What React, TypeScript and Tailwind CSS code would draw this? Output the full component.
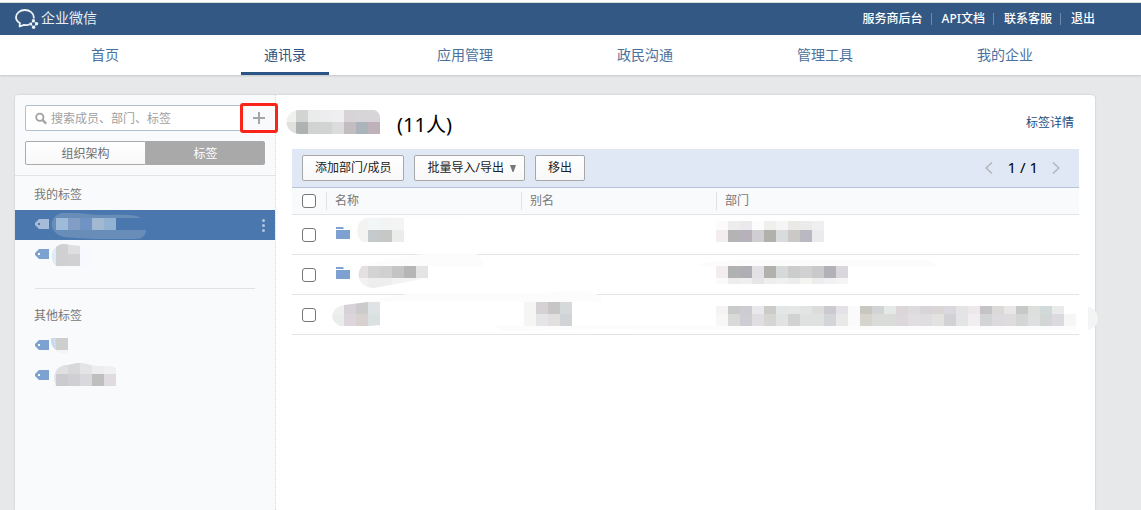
import { ReactNode } from 'react';

const NAV_ITEMS = ['首页', '通讯录', '应用管理', '政民沟通', '管理工具', '我的企业'];
const ACCOUNT_LINKS = ['服务商后台', 'API文档', '联系客服', '退出'];

type Cell = [x: number, y: number, w: number, h: number, color: string];

// One strip of equal blocks, 12px wide each
function strip(x: number, y: number, h: number, colors: string): Cell[] {
  return colors.split(' ').map((c, i) => [x + i * 12, y, 12, h, `#${c}`]);
}

function Mosaic({ box, cells, smear, smearColor = '#fcfcfc', clip, id }: {
  box: [number, number, number, number];
  cells: Cell[];
  smear?: string;
  smearColor?: string;
  clip?: string;
  id: string;
}) {
  return (
    <svg
      width={box[2]}
      height={box[3]}
      viewBox={box.join(' ')}
      className="block shrink-0 overflow-visible"
      aria-hidden="true"
    >
      {smear && <path d={smear} fill={smearColor} />}
      {clip && (
        <clipPath id={id}>
          <path d={clip} />
        </clipPath>
      )}
      <g clipPath={clip ? `url(#${id})` : undefined} shapeRendering="crispEdges">
        {cells.map(([x, y, w, h, color], i) => (
          <rect key={i} x={x} y={y} width={w} height={h} fill={color} />
        ))}
      </g>
    </svg>
  );
}

function Logo() {
  return (
    <svg width="24" height="20" viewBox="0 0 24 20" fill="none" aria-hidden="true">
      <path
        d="M14 15.700c-1.600.5-3.400.5-5 .1L4.600 17.500l.3-3.400C2.300 12.600 1 10.500 1 8.300 1 4.200 5 1 9.900 1s8.900 3.200 8.900 7.300v1.200"
        stroke="#eef2f6"
        strokeWidth="1.800"
        strokeLinejoin="round"
      />
      <g fill="#eef2f6">
        <circle cx="18.400" cy="11.800" r="1.700" />
        <circle cx="21.600" cy="14.800" r="1.700" />
        <circle cx="18.600" cy="18.200" r="1.700" />
        <circle cx="15.600" cy="15" r="1.600" />
      </g>
      <path d="M18.400 11.800l3.200 3-3 3.400-3-3.200z" stroke="#eef2f6" strokeWidth=".8" />
    </svg>
  );
}

function TagIcon({ color, hole }: { color: string; hole: string }) {
  return (
    <svg width="14" height="10" viewBox="0 0 14 10" className="mt-[9px] shrink-0" aria-hidden="true">
      <path d="M4 0h10v10H4L0 6V4z" fill={color} />
      <rect x="3" y="4" width="2" height="2" fill={hole} />
    </svg>
  );
}

function FolderIcon() {
  return (
    <svg width="14" height="12" viewBox="0 0 14 12" className="mb-1 shrink-0" aria-hidden="true">
      <path d="M0 0h7l1 2H0zM0 3h14v9H0z" fill="#7da2d1" />
    </svg>
  );
}

function TagRow({ children, active, gap }: { children: ReactNode; active?: boolean; gap: string }) {
  return (
    <li>
      <a
        href="#tag"
        aria-label="标签"
        className={`flex h-[30px] items-start pl-5 pr-[10px] ${gap} ${active ? 'bg-[#4a77ad]' : ''}`}
      >
        <TagIcon color={active ? '#a5bbd8' : '#7da2d1'} hole={active ? '#4a77ad' : '#f9fafc'} />
        {children}
        {active && (
          <svg width="3" height="13" viewBox="0 0 3 13" fill="#b4c6dd" className="ml-auto mt-[9px]" aria-hidden="true">
            <circle cx="1.500" cy="1.500" r="1.500" />
            <circle cx="1.500" cy="6.500" r="1.500" />
            <circle cx="1.500" cy="11.500" r="1.500" />
          </svg>
        )}
      </a>
    </li>
  );
}

function Sidebar() {
  return (
    <aside className="w-[261px] shrink-0 rounded-tl border-r border-dotted border-[#d5dae0] bg-[#f9fafc]">
      <div className="border-b border-[#e2e4e7] p-[10px]">
        <div className="relative flex h-[26px] items-center rounded-xs border border-[#b2bfcc] bg-white pl-[9px]">
          <svg width="13" height="13" viewBox="0 0 13 13" fill="none" stroke="#a3a3a3" strokeWidth="2" aria-hidden="true">
            <circle cx="5.200" cy="5.200" r="3.900" />
            <path d="M8 8l4 4" strokeWidth="2.400" />
          </svg>
          <input
            type="text"
            aria-label="搜索"
            placeholder="搜索成员、部门、标签"
            className="ml-1 w-full min-w-0 bg-transparent pt-[2px] text-[12px] text-[#333] outline-none placeholder:text-[#a0a0a0]"
          />
          {/* highlighted add button, overlaps the right edge of the search box */}
          <button
            type="button"
            aria-label="添加"
            className="absolute -right-[14px] -top-[3px] flex h-[30px] w-[38px] items-center justify-center rounded-[3px] border-3 border-[#fb2418] bg-[#f9fafc]"
          >
            <svg width="12" height="12" viewBox="0 0 12 12" fill="#a6a6a6" aria-hidden="true">
              <path d="M5 0h2v5h5v2H7v5H5V7H0V5h5z" />
            </svg>
          </button>
        </div>
        <div className="mt-[10px] flex h-6 text-[12px]">
          <button type="button" className="flex-1 rounded-l-xs border border-[#ababab] bg-linear-to-b from-white to-[#f8f8f8] pt-[2px] text-[#6f6f6f]">
            组织架构
          </button>
          <button type="button" className="flex-1 rounded-r-xs bg-[#a9a9a9] pt-[2px] text-white">标签</button>
        </div>
      </div>

      <h2 className="mt-[9px] px-[19px] pb-[5px] text-[12px] leading-5 text-[#777]">我的标签</h2>
      <ul>
        <TagRow active gap="gap-[2px]">
          <Mosaic
            id="tag-a"
            box={[51, 210, 95, 30]}
            cells={strip(56, 218, 12, '9ebbd9 829dc6 6f93c3 a2b9d1 93b2d3')}
            smear="M56 230H146C146 236 142 239 135 239H95C85 238 70 238 64 237C48 233 48 216 62 213H76C88 214 95 215 108 215C125 214 138 215 141 218H56Z"
            smearColor="#698db9"
          />
        </TagRow>
        <TagRow gap="gap-[2px]">
          <Mosaic
            id="tag-b"
            box={[51, 240, 41, 30]}
            cells={[[51, 244, 5, 22, '#e1ebf6'], [56, 244, 12, 22, '#cfd0d1'], [68, 244, 12, 10, '#dedee0'], [68, 254, 12, 12, '#d1d1d3'], [80, 247, 12, 19, '#f8f9fe']]}
            clip="M56 266C49 260 50 247 62 244C68 244 74 246 92 247V266Z"
          />
        </TagRow>
      </ul>
      <hr className="mx-5 mt-[18px] border-[#e0e2e5]" />
      <h2 className="mt-[17px] px-[19px] pb-[5px] text-[12px] leading-5 text-[#777]">其他标签</h2>
      <ul>
        <TagRow gap="gap-[2px]">
          <Mosaic
            id="tag-c"
            box={[51, 331, 17, 24]}
            cells={[[51, 338, 5, 12, '#cbdaec'], [56, 338, 12, 12, '#cdcfce']]}
            smear="M56 350C58 353 63 355 68 353V350Z"
            smearColor="#f4f5f6"
            clip="M51 338H68V350H56C52 348 50 342 51 338Z"
          />
        </TagRow>
        <TagRow gap="gap-[5px]">
          <Mosaic
            id="tag-d"
            box={[54, 361, 62, 30]}
            cells={[
              [54, 362, 2, 24, '#dce5f2'],
              ...strip(56, 362, 12, 'e0e0e3 d8d8db e4e4e7 ededef f0eff2'),
              ...strip(56, 374, 12, 'ccccd0 d0cfd3 d9d8dd bec0bf dfdbe0'),
            ]}
            clip="M56 386C52 378 54 367 65 365C71 365 74 363 80 363C88 363 90 366 98 366C110 366 113 366 116 368V386Z"
          />
        </TagRow>
      </ul>
    </aside>
  );
}

const TOOL_BUTTON =
  'flex h-[26px] items-center rounded-xs border border-[#a8a8a8] bg-linear-to-b from-white to-[#f8f8f8] px-3 text-[12px] text-[#222]';

function Toolbar() {
  return (
    <div className="flex h-[38px] items-center gap-[10px] bg-[#dfe8f4] pl-[10px] pr-[19px]">
      <button type="button" className={TOOL_BUTTON}>添加部门/成员</button>
      <button type="button" className={`${TOOL_BUTTON} gap-[6px]`}>
        批量导入/导出
        <svg width="6" height="7" viewBox="0 0 6 7" fill="#777" className="-mr-1" aria-hidden="true">
          <path d="M0 0h6L3.500 7h-1z" />
        </svg>
      </button>
      <button type="button" className={TOOL_BUTTON}>移出</button>
      <div className="ml-auto flex items-center gap-[14px]">
        <button type="button" aria-label="上一页">
          <svg width="8" height="12" viewBox="0 0 8 12" fill="none" stroke="#b4b8bd" strokeWidth="1.600" aria-hidden="true">
            <path d="M7 .5L1.200 6 7 11.500" />
          </svg>
        </button>
        <span className="pb-[2px] text-[15px] leading-5 text-black">1 / 1</span>
        <button type="button" aria-label="下一页">
          <svg width="8" height="12" viewBox="0 0 8 12" fill="none" stroke="#b4b8bd" strokeWidth="1.600" aria-hidden="true">
            <path d="M1 .5L6.800 6 1 11.500" />
          </svg>
        </button>
      </div>
    </div>
  );
}

function Check({ label }: { label: string }) {
  return (
    <input
      type="checkbox"
      aria-label={label}
      className="block size-[14px] appearance-none rounded-[3px] border border-[#767676] bg-white checked:bg-[#4a77ad]"
    />
  );
}

const ROWS = [
  {
    folder: true,
    name: (
      <Mosaic
        id="name-1"
        box={[357, 215, 47, 39]}
        cells={[
          [357, 218, 11, 24, '#f3f3f1'],
          ...strip(368, 218, 12, 'f3f6f6 f2f4f4 f4f4f4'),
          ...strip(368, 230, 12, 'c5cacc c6c8c8 ececea'),
        ]}
        smear="M368 217H460C468 217 470 218 460 218H368Z"
        clip="M362 242C354 234 356 219 368 218H404V242Z"
      />
    ),
    alias: null,
    dept: (
      <Mosaic
        id="dept-1"
        box={[716, 215, 108, 39]}
        cells={[
          ...strip(716, 221, 9, 'fdfafb ededed ebe9ec fcfcfc efefed f5f5f5 ebe9e6 ebebec eeeff1'),
          ...strip(716, 230, 12, 'f4edef b3b4b3 b6b1ba d0ced2 b1b1ac d8dcdd cac9c7 bab9c1 ebebed'),
        ]}
      />
    ),
  },
  {
    folder: true,
    name: (
      <Mosaic
        id="name-2"
        box={[357, 255, 71, 39]}
        cells={[
          ...strip(356, 266, 12, 'e4dfe0 d3d3d3 d1cfd0 c4c4c4 b5b6b5 e4e4e4'),
          ...strip(356, 278, 12, 'f2f2f2 eeeeee eeeeee f2f2f2 f4f4f4 f8f8f8'),
        ]}
        smear="M358 266C378 261 415 254 427 254H475C481 255 483 260 483 266Z"
        clip="M362 266H428V278L374 288C361 288 354 276 362 266Z"
      />
    ),
    alias: null,
    dept: (
      <Mosaic
        id="dept-2"
        box={[716, 255, 132, 39]}
        cells={[
          ...strip(716, 266, 12, 'f3edee b0b2b1 b1adb4 e3e1e6 b2b2ad d5d9da cccccd d0d2d1 cac8ca b1b1b7 d9d7dc'),
          ...strip(716, 278, 6, 'fafafa ededed efefef e6e6e6 eeeeed f0f0f0 ebecee f4f5f1 ededee f0f1f4 f5f5f5'),
        ]}
        smear="M696 266C704 262 718 261 735 260H925C932 262 936 264 937 266Z"
      />
    ),
  },
  {
    folder: false,
    name: (
      <Mosaic
        id="name-3"
        box={[332, 295, 48, 39]}
        cells={[
          ...strip(332, 302, 12, 'eef0f0 d7d2d7 cacbca dfe3e6'),
          ...strip(332, 314, 12, 'e9edeb dcd6dc d7d2d0 dae1e1'),
        ]}
        smear="M368 302C382 298 398 294 425 293H545C565 290 588 289 596 294C600 296 602 299 602 302Z"
        clip="M340 326C328 320 330 308 344 305L368 302H380V325L358 327Z"
      />
    ),
    alias: (
      <Mosaic
        id="alias-3"
        box={[524, 295, 48, 39]}
        cells={[
          ...strip(524, 302, 12, 'f5f5f4 d6d1d4 c6c6c6 d5d9da'),
          ...strip(524, 314, 12, 'f5f5f4 e5e4e8 e3dfdf d1d4d7'),
        ]}
        smear="M494 326H1076V330H716C660 330 620 329 600 329C560 330 520 331 502 331Z"
      />
    ),
    dept: (
      <Mosaic
        id="dept-3"
        box={[716, 295, 382, 39]}
        cells={[
          ...strip(716, 306, 8, 'f6f3f3 c8cbca ceccd2 e9e8ec cbcbc7 e3e6e6 e5e7e7 e2e4e3 dcdddb cccad0 e4e2e6 fafafa cac7c1 d2d3d5 e4e8e6 dcd6d9 dddbdd d7d5d9 d9d6d5 dad8de e4e4e7 efe8ea c5c3c8 dbdad9 eae6e8 c7c9c8 dddfdd d1d9db e8ebe9'),
          ...strip(716, 314, 12, 'f8f6f6 d9d9d7 cecdd3 e0dee2 d5d6d3 e0e3e2 d2d2d2 dfe1e0 dfe1e0 d2d6d9 e9e9e9 fafafa d7d4ce d9dcd9 d9dcd9 dcd7db e0dee0 dfdde0 e2e2e1 d2d1d3 e2e4e6 f2edef d3d4d6 dcdadc dedcde d2d6d4 dedfe0 d2d7d5 dcdae0 f6f6f6'),
        ]}
        smear="M1088 307C1101 309 1101 328 1088 330Z"
        smearColor="#f3f5f4"
      />
    ),
  },
];

function MemberTable() {
  return (
    <table className="w-full table-fixed border-collapse text-left text-[12px]">
      <colgroup>
        <col className="w-[34px]" />
        <col className="w-[195px]" />
        <col className="w-[195px]" />
        <col />
      </colgroup>
      <thead>
        <tr className="h-[27px] border-b border-t border-b-[#e2e4e7] border-t-[#b5c4d8] bg-[#f9fafc] text-[#777]">
          <th className="py-0 pl-[10px]">
            <Check label="全选" />
          </th>
          {['名称', '别名', '部门'].map((title) => (
            <th key={title} className="p-0 font-normal">
              <div className="border-l border-[#e0e2e5] pl-2 leading-[18px]">{title}</div>
            </th>
          ))}
        </tr>
      </thead>
      <tbody>
        {ROWS.map((row, i) => (
          <tr key={i} className="h-10 border-b border-[#e2e4e7]">
            <td className="p-0 pl-[10px]">
              <Check label={`选择第${i + 1}行`} />
            </td>
            <td className={row.folder ? 'p-0 pl-[10px]' : 'p-0 pl-[6px]'}>
              <div className="flex items-center gap-[7px]">
                {row.folder && <FolderIcon />}
                {row.name}
              </div>
            </td>
            <td className="p-0 pl-[3px]">{row.alias}</td>
            <td className="p-0">{row.dept}</td>
          </tr>
        ))}
      </tbody>
    </table>
  );
}

export default function App() {
  return (
    <div className="flex min-h-screen flex-col overflow-x-hidden bg-[#e7e8ea] font-['Noto_Sans','Noto_Sans_CJK_SC',sans-serif]">
      <header className="border-t-2 border-white bg-[#335883]">
        <div className="border-t border-[#d9dcdf]">
          <div className="ml-[15px] mr-[46px] flex h-8 items-center">
            <Logo />
            <span className="ml-[2px] pb-[3px] text-[14px] leading-5 text-[#e8edf3]">企业微信</span>
            <nav className="ml-auto flex items-center text-[12px] font-medium text-white">
              {ACCOUNT_LINKS.map((label, i) => (
                <a
                  key={label}
                  href="#account"
                  className={i > 0 ? 'ml-2 border-l border-[#6f89a8] pl-[10px] leading-3' : 'leading-3'}
                >
                  {label}
                </a>
              ))}
            </nav>
          </div>
        </div>
      </header>

      <nav className="bg-white shadow-[0_1px_2px_rgba(0,0,0,0.15)]">
        <div className="ml-[15px] mr-[46px] grid h-10 grid-cols-6">
          {NAV_ITEMS.map((label) => (
            <a
              key={label}
              href="#nav"
              className={
                label === '通讯录'
                  ? 'mx-auto flex w-[88px] items-center justify-center border-b-3 border-[#2b5584] pt-[1px] text-[14px] text-[#2b5584]'
                  : 'flex items-center justify-center pb-[2px] text-[14px] text-[#4b719c]'
              }
            >
              {label}
            </a>
          ))}
        </div>
      </nav>

      <div className="ml-[15px] mr-[46px] mt-5 flex grow rounded-t bg-white shadow-[0_0_2px_rgba(0,0,0,0.2)]">
        <Sidebar />
        <main className="min-w-0 flex-1 px-4">
          <div className="flex h-[54px] items-center pr-[5px]">
            <div className="-ml-[6px]">
              <Mosaic
                id="title"
                box={[286, 110, 94, 24]}
                cells={[
                  [286, 110, 10, 12, '#f0f1ef'],
                  ...strip(296, 110, 12, 'd1d4d1 eaecec ededf0 efeff1 d8d3d7 d7d5d7 d7d5d7'),
                  [286, 122, 10, 12, '#e0e0dc'],
                  ...strip(296, 122, 12, 'aeb3b2 d1d3d2 d2d4d2 dcdbdd c4bdbf abb4ba beb1b9'),
                ]}
                clip="M300 110H374C378 111 380 114 380 118V134H300C282 134 282 110 300 110Z"
              />
            </div>
            <h1 className="ml-[17px] mt-[6px] text-[20px] leading-6 text-black">(11人)</h1>
            <a href="#detail" className="ml-auto pt-[2px] text-[12px] text-[#1c4c80]">标签详情</a>
          </div>
          <Toolbar />
          <MemberTable />
        </main>
      </div>
    </div>
  );
}
